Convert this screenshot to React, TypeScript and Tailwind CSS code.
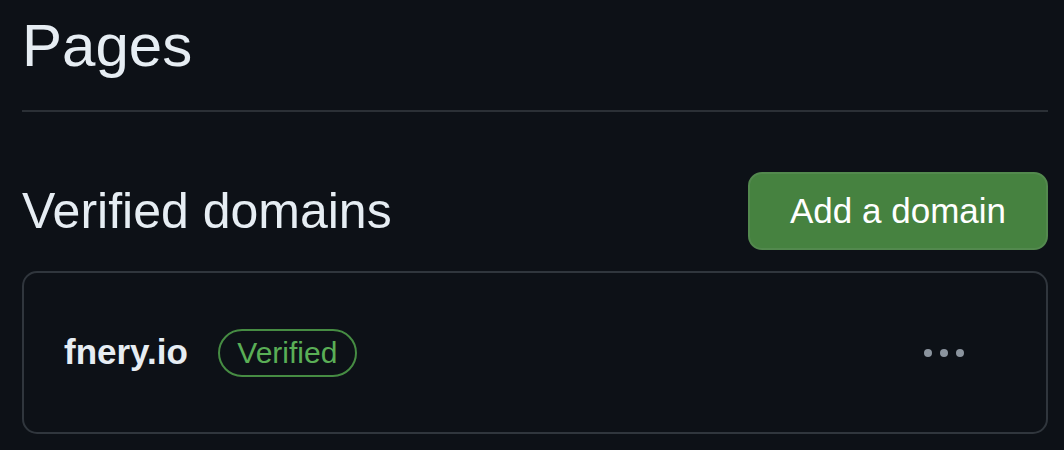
export default function App() {
  return (
    <div
      className="min-h-[450px] bg-[#0d1117] pl-[22px] pr-[16px] text-[#e6edf3]"
      style={{ fontFamily: '"Liberation Sans", Arial, sans-serif' }}
    >
      <div className="pt-[8px] pb-[27px] border-b-2 border-[#2b3036]">
        <h1 className="text-[60px] leading-[1.25] font-normal">Pages</h1>
      </div>

      <div className="mt-[60px] flex items-center justify-between">
        <h2 className="text-[50px] leading-[1.25] font-normal">Verified domains</h2>
        <button className="h-[78px] px-[40px] rounded-[14px] border-2 border-[#53894e] bg-[#468240] text-[35px] text-white">
          Add a domain
        </button>
      </div>

      <div className="mt-[21px] h-[163px] rounded-[15px] border-2 border-[#30363d] pl-[40px] pr-[82px] flex items-center">
        <span className="text-[35px] font-bold">fnery.io</span>
        <span className="ml-[30px] h-[48px] px-[17.5px] rounded-full border-2 border-[#468c43] text-[30px] text-[#5aae56] flex items-center">
          Verified
        </span>
        <div className="ml-auto flex items-center gap-[8px]">
          <span className="w-[8px] h-[8px] rounded-full bg-[#8b949e]" />
          <span className="w-[8px] h-[8px] rounded-full bg-[#8b949e]" />
          <span className="w-[8px] h-[8px] rounded-full bg-[#8b949e]" />
        </div>
      </div>
    </div>
  );
}
